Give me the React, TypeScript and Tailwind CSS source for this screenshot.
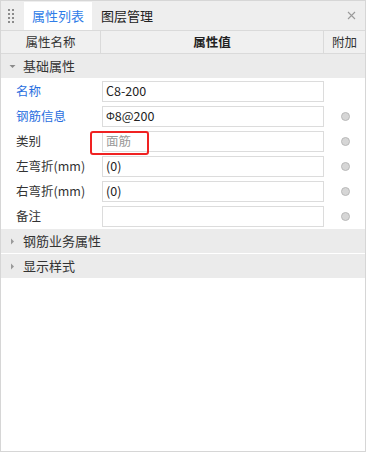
import React from "react";

type Row = { label: string; value: string; blue?: boolean; dot?: boolean; placeholder?: boolean; marked?: boolean };

const rows: Row[] = [
  { label: "名称", value: "C8-200", blue: true },
  { label: "钢筋信息", value: "Φ8@200", blue: true, dot: true },
  { label: "类别", value: "面筋", dot: true, placeholder: true, marked: true },
  { label: "左弯折(mm)", value: "(0)", dot: true },
  { label: "右弯折(mm)", value: "(0)", dot: true },
  { label: "备注", value: "", dot: true },
];

function Grip() {
  return (
    <div className="grid grid-cols-2 gap-x-[2px] gap-y-[2px] ml-[7px] mr-[10px]">
      {[0, 1, 2, 3, 4, 5, 6, 7].map((i) => (
        <span key={i} className="w-[2px] h-[2px] bg-[#8c8c8c]" />
      ))}
    </div>
  );
}

function GroupRow({ title, open }: { title: string; open?: boolean }) {
  return (
    <div className="h-[25px] bg-[#ebebeb] flex items-center border-b border-white">
      <span className="w-[22px] flex justify-center">
        {open ? (
          <svg width="7" height="5" viewBox="0 0 7 5">
            <path d="M0.5 1 L6.5 1 L3.5 4 Z" fill="#8a8a8a" />
          </svg>
        ) : (
          <svg width="5" height="7" viewBox="0 0 5 7">
            <path d="M1 0.5 L4 3.5 L1 6.5 Z" fill="#9a9a9a" />
          </svg>
        )}
      </span>
      <span className="text-[13px] text-[#333]">{title}</span>
    </div>
  );
}

export default function App() {
  return (
    <div
      className="w-[366px] h-[452px] bg-white border border-[#d6d6d6] flex flex-col text-[12.5px]"
      style={{ fontFamily: '"Noto Sans CJK SC", "Noto Sans", sans-serif' }}
    >
      <div className="h-[29px] bg-[#eeeeee] flex items-end">
        <div className="h-full flex items-center">
          <Grip />
        </div>
        <div className="h-[28px] w-[68px] bg-white flex items-center justify-center text-[#2f7de8] text-[13px]">
          属性列表
        </div>
        <div className="h-[28px] px-[9px] flex items-center text-[#222] text-[13px]">图层管理</div>
        <div className="flex-1" />
        <div className="h-full flex items-center pr-[9px]">
          <svg width="9" height="9" viewBox="0 0 9 9">
            <path d="M1 1 L8 8 M8 1 L1 8" stroke="#9a9a9a" strokeWidth="1.1" />
          </svg>
        </div>
      </div>

      <div className="h-[24px] grid grid-cols-[100px_223px_1fr] bg-[#f0f0f0] border-y border-[#dadada]">
        <div className="flex items-center justify-center text-[#333] border-r border-[#dadada]">属性名称</div>
        <div className="flex items-center justify-center text-[#222] font-bold border-r border-[#dadada]">属性值</div>
        <div className="flex items-center justify-center text-[#333]">附加</div>
      </div>

      <GroupRow title="基础属性" open />

      {rows.map((r) => (
        <div key={r.label} className="h-[25px] grid grid-cols-[101px_222px_1fr] items-center">
          <div className={`pl-[15px] ${r.blue ? "text-[#2a6fe0]" : "text-[#333]"}`}>{r.label}</div>
          <div className="relative h-[21px] border border-[#dcdcdc] flex items-center pl-[3px]">
            <span className={r.placeholder ? "text-[#999]" : "text-[#222]"}>
              {r.value.startsWith("Φ") ? (
                <>
                  <span className="text-[11px] align-top">Φ</span>
                  {r.value.slice(1)}
                </>
              ) : (
                r.value
              )}
            </span>
            {r.marked && (
              <span className="absolute left-[-13px] top-[-1px] w-[59px] h-[24px] border-[2.5px] border-[#f02222] rounded-[3px]" />
            )}
          </div>
          <div className="flex justify-center">
            {r.dot && <span className="w-[9px] h-[9px] rounded-full bg-[#d6d6d6] border border-[#b9b9b9] ml-[2px]" />}
          </div>
        </div>
      ))}

      <GroupRow title="钢筋业务属性" />
      <GroupRow title="显示样式" />
      <div className="flex-1" />
    </div>
  );
}
